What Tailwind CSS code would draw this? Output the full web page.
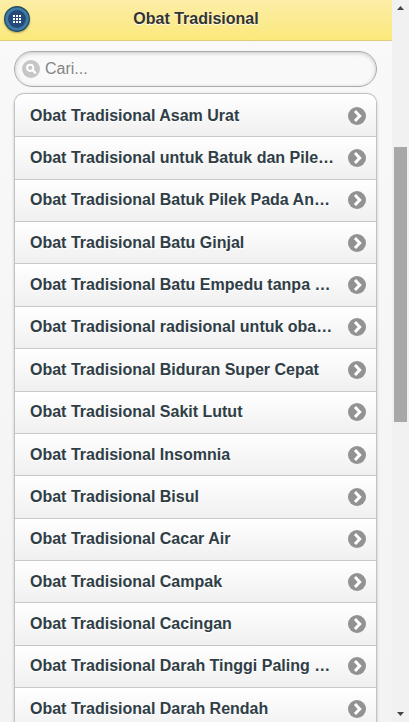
<!DOCTYPE html>
<html lang="id">
<head>
  <meta charset="UTF-8">
  <meta name="viewport" content="width=device-width, initial-scale=1.0">
  <title>Obat Tradisional</title>
  <script src="https://cdn.jsdelivr.net/npm/@tailwindcss/browser@4"></script>
</head>
<body class="flex h-screen overflow-hidden bg-[#f7f7f7] font-['Liberation_Sans',Arial,sans-serif]">

  <div class="flex flex-col flex-1 min-w-0 h-screen overflow-hidden bg-linear-to-b from-[#f9f9f9] to-[#f3f3f3]">
    <header class="relative shrink-0 h-[41px] flex items-center justify-center bg-linear-to-b from-[#fceda7] to-[#fbe97a] border-b border-[#dfcb7c]">
      <button class="absolute left-1 top-[6px] size-[26px] rounded-full shadow-[0_1px_2px_rgba(0,0,0,.3)]" aria-label="Menu">
        <svg class="size-[26px]" viewBox="0 0 26 26">
          <circle cx="13" cy="13" r="12.3" fill="#3d7ba6" stroke="#244f60" stroke-width="1.4"/>
          <circle cx="13" cy="13" r="9" fill="#25497a"/>
          <g fill="#fff">
            <rect x="9" y="9" width="2" height="2"/><rect x="12" y="9" width="2" height="2"/><rect x="15" y="9" width="2" height="2"/>
            <rect x="9" y="12" width="2" height="2"/><rect x="12" y="12" width="2" height="2"/><rect x="15" y="12" width="2" height="2"/>
            <rect x="9" y="15" width="2" height="2"/><rect x="12" y="15" width="2" height="2"/><rect x="15" y="15" width="2" height="2"/>
          </g>
        </svg>
      </button>
      <h1 class="text-base leading-5 font-bold text-[#333] text-shadow-[0_1px_0_#fff] -mt-[3px]">Obat Tradisional</h1>
    </header>

    <main class="pl-[14px] pr-[15px] pt-[10px]">
      <div class="flex items-center h-9 rounded-full border border-[#aaa] bg-[#f9f9f9] pl-[7px] inset-shadow-[0_1px_4px_rgba(0,0,0,.2)]">
        <svg class="size-[18px] shrink-0" viewBox="0 0 18 18">
          <circle cx="9" cy="9" r="9" fill="#c6c6c6"/>
          <circle cx="8.2" cy="7.8" r="3.1" fill="none" stroke="#fff" stroke-width="2"/>
          <path d="M10.4 10l3.4 3.4" stroke="#fff" stroke-width="2.4"/>
        </svg>
        <input type="text" placeholder="Cari..." class="ml-[5px] w-full text-base leading-5 outline-none placeholder:text-[#858585]">
      </div>

      <ul id="list" class="mt-[6px] pt-px rounded-t-[10px] border border-b-0 border-[#c2c2c2] bg-white overflow-hidden shadow-[0_1px_3px_rgba(0,0,0,.2)]"></ul>
    </main>
  </div>

  <!-- scrollbar -->
  <div class="w-[17px] h-screen shrink-0 flex flex-col items-center bg-[#f1f1f1]">
    <svg class="w-[17px] h-[17px] shrink-0" viewBox="0 0 17 17"><path d="M5 10l3.5-4L12 10z" fill="#444"/></svg>
    <div class="mt-[130px] w-[13px] h-[275px] bg-[#a8a8a8]"></div>
    <svg class="w-[17px] h-[17px] shrink-0 mt-auto" viewBox="0 0 17 17"><path d="M5 7h7l-3.5 4z" fill="#444"/></svg>
  </div>

  <script>
    const items = [
      'Obat Tradisional Asam Urat',
      'Obat Tradisional untuk Batuk dan Pile…',
      'Obat Tradisional Batuk Pilek Pada An…',
      'Obat Tradisional Batu Ginjal',
      'Obat Tradisional Batu Empedu tanpa …',
      'Obat Tradisional radisional untuk oba…',
      'Obat Tradisional Biduran Super Cepat',
      'Obat Tradisional Sakit Lutut',
      'Obat Tradisional Insomnia',
      'Obat Tradisional Bisul',
      'Obat Tradisional Cacar Air',
      'Obat Tradisional Campak',
      'Obat Tradisional Cacingan',
      'Obat Tradisional Darah Tinggi Paling …',
      'Obat Tradisional Darah Rendah'
    ];

    document.getElementById('list').innerHTML = items.map(item => `
      <li class="flex items-center justify-between h-[42.36px] pl-[15px] pr-[10px] border-b border-[#c8c8c8] bg-linear-to-b from-white to-[#f0f0f0]">
        <span class="text-base leading-5 font-bold text-[#2f3e46] whitespace-nowrap text-shadow-[0_1px_0_#fff]">${item}</span>
        <svg class="size-[18px] shrink-0" viewBox="0 0 18 18">
          <circle cx="9" cy="9" r="9" fill="#929292"/>
          <path d="M7 4l4.7 5L7 14" fill="none" stroke="#fff" stroke-width="3"/>
        </svg>
      </li>
    `).join('');
  </script>

</body>
</html>
